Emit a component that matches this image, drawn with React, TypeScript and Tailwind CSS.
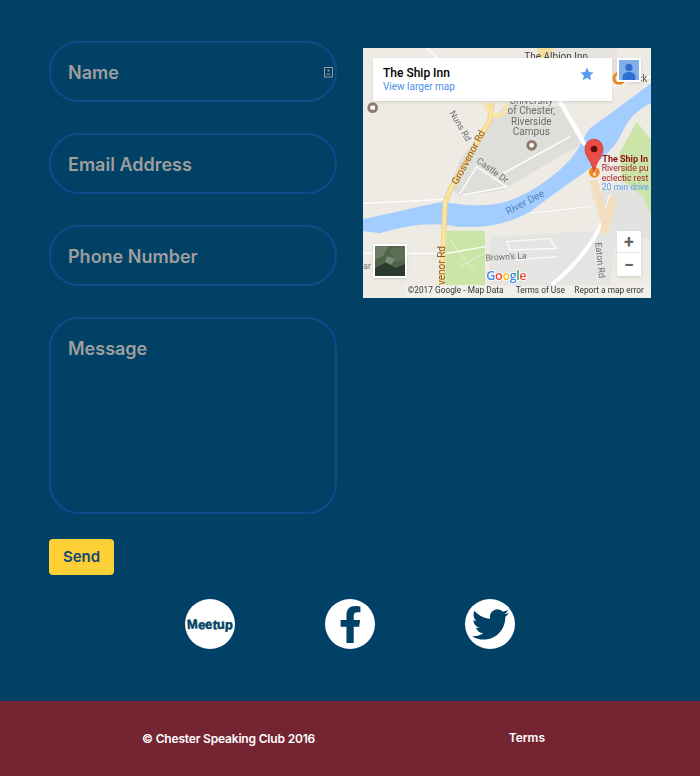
import { FaFacebookF } from 'react-icons/fa'

const fieldClass =
  'block w-full rounded-[30px] border-2 border-[#114a8b] bg-transparent px-[17px] text-[18px] font-semibold text-white placeholder:text-[#9e9e9e] outline-none'

const MapDrawing = () => (
  <svg viewBox="39 24 864 750" className="block h-full w-full blur-[0.4px]" fontFamily="Roboto, sans-serif">
    <rect x="39" y="24" width="864" height="750" fill="#eeebe4" />
    {/* grey built up areas */}
    <path d="M470 190 L640 200 L700 310 L560 390 L460 450 L330 470 L300 440 L330 360 L400 270 Z" fill="#dededa" />
    <path d="M420 590 L800 570 L780 740 L420 740 Z" fill="#e4e4e2" />
    <path d="M560 24 L800 24 L800 100 L620 180 L600 60 Z" fill="#e6e4de" />
    <path d="M720 460 L903 420 L903 600 L790 580 Z" fill="#e2e2e0" />
    {/* parks */}
    <path d="M290 572 L405 572 L405 735 L285 735 Z" fill="#cbe4a8" />
    <path d="M808 340 L860 245 L903 300 L903 530 L880 470 L815 420 Z" fill="#cbe4a8" />
    <path d="M560 24 L610 24 L590 60 L570 60 Z" fill="#f5df9e" />
    {/* river */}
    <path
      d="M39 537 C120 520 200 500 280 485 C330 495 400 500 450 490 C520 475 600 420 650 370 C690 330 700 290 720 265 C770 230 850 170 903 130 L903 190 C860 210 835 235 810 290 C790 330 740 370 700 400 C640 440 590 480 540 515 C470 555 400 565 320 560 C250 545 170 555 90 580 L39 573 Z"
      fill="#a3ccff"
    />
    {/* white roads */}
    <g fill="none" stroke="#fff" strokeLinecap="round">
      <path d="M630 185 L702 310" strokeWidth="13" />
      <path d="M780 470 C770 540 720 640 610 730" strokeWidth="12" />
      <path d="M39 490 L280 478" strokeWidth="4" />
      <path d="M40 640 L290 640 L405 620" strokeWidth="4" />
      <path d="M340 465 L470 440 L380 380 L330 460" strokeWidth="4" />
      <path d="M460 400 L660 290" strokeWidth="4" />
      <path d="M470 605 L600 595 L620 625 L480 630 Z" strokeWidth="4" opacity="0.8" />
      <path d="M500 660 L620 650" strokeWidth="4" opacity="0.8" />
      <path d="M540 520 L720 500" strokeWidth="3" />
      <path d="M300 600 L370 690 M330 680 L400 640" strokeWidth="2" opacity="0.8" />
      <path d="M230 24 L280 70 M700 160 L903 110" strokeWidth="5" />
    </g>
    {/* yellow road */}
    <path d="M275 735 L285 490 L300 450 L420 240 L425 190" fill="none" stroke="#e8cf8e" strokeWidth="16" />
    <path d="M275 735 L285 490 L300 450 L420 240 L425 190" fill="none" stroke="#fbe3a0" strokeWidth="11" />
    <path d="M405 190 C420 240 470 240 470 190" fill="none" stroke="#fbe3a0" strokeWidth="11" />
    <path d="M730 420 L770 570 M790 470 L760 580" stroke="#f3dfbf" strokeWidth="24" fill="none" />
    <g fill="#6d6d6d">
      <text x="523" y="60" fontSize="30" fill="#444">The Albion Inn</text>
      <text x="544" y="192" textAnchor="middle" fontSize="30">University</text>
      <text x="544" y="222" textAnchor="middle" fontSize="30">of Chester,</text>
      <text x="544" y="254" textAnchor="middle" fontSize="30">Riverside</text>
      <text x="544" y="286" textAnchor="middle" fontSize="30">Campus</text>
      <text transform="translate(298 218) rotate(60)" fontSize="27">Nuns Rd</text>
      <text transform="translate(378 366) rotate(36)" fontSize="27">Castle Dr</text>
      <text transform="translate(322 436) rotate(-62)" fontSize="30" fill="#8a5a1c">Grosvenor Rd</text>
      <text transform="translate(286 735) rotate(-90)" fontSize="30" fill="#8a5a1c">venor Rd</text>
      <text transform="translate(474 525) rotate(-28)" fontSize="30" fill="#4a7fc0">River Dee</text>
      <text x="407" y="662" fontSize="26" transform="rotate(-3 407 662)">Brown's La</text>
      <text transform="translate(736 608) rotate(84)" fontSize="27">Eaton Rd</text>
      <text x="40" y="688" fontSize="26">ar</text>
      <text x="757" y="366" fontSize="27" fontWeight="700" fill="#8e0f13">The Ship In</text>
      <text x="755" y="394" fontSize="26" fill="#a3262a">Riverside pu</text>
      <text x="755" y="422" fontSize="26" fill="#a3262a">eclectic rest</text>
      <text x="755" y="450" fontSize="26" fill="#5b9bf0">20 min drive</text>
    </g>
    {/* poi dots */}
    <circle cx="68" cy="203" r="16" fill="#8f7a6e" />
    <rect x="61" y="197" width="14" height="12" fill="#fff" />
    <circle cx="545" cy="316" r="16" fill="#8f7a6e" />
    <circle cx="545" cy="316" r="7" fill="#fff" />
    <circle cx="807" cy="115" r="15" fill="none" stroke="#f08a1d" strokeWidth="9" />
    <text x="832" y="126" fontSize="30" fill="#555">Hick</text>
    <circle cx="733" cy="397" r="16" fill="#f08a1d" />
    <rect x="730" y="387" width="6" height="20" fill="#fff" />
    {/* marker */}
    <path
      d="M732 298 C712 298 705 316 705 328 C705 350 725 362 732 398 C739 362 759 350 759 328 C759 316 752 298 732 298 Z"
      fill="#ea4d45"
      stroke="#c9342e"
      strokeWidth="2"
    />
    <circle cx="732" cy="327" r="10" fill="#5c0f0c" />
    {/* google logo */}
    <text
      x="409"
      y="719"
      fontSize="38"
      fontFamily="'Open Sans', sans-serif"
      fontWeight="600"
      stroke="#fff"
      strokeWidth="5"
      paintOrder="stroke"
      textLength="121"
    >
      <tspan fill="#4285f4">G</tspan>
      <tspan fill="#ea4335">o</tspan>
      <tspan fill="#fbbc05">o</tspan>
      <tspan fill="#4285f4">g</tspan>
      <tspan fill="#34a853">l</tspan>
      <tspan fill="#ea4335">e</tspan>
    </text>
    {/* attribution */}
    <rect x="165" y="736" width="738" height="38" fill="#f3f2ee" opacity="0.75" />
    <g fontSize="25" fill="#333">
      <text x="173" y="758">©2017 Google - Map Data</text>
      <text x="497" y="758">Terms of Use</text>
      <text x="673" y="758">Report a map error</text>
    </g>
  </svg>
)

const MapEmbed = () => (
  <div className="relative h-[250px] w-[288px] overflow-hidden bg-[#eeebe4] font-['Roboto',sans-serif]">
    <MapDrawing />
    {/* place card */}
    <div className="absolute left-[10px] top-[10px] flex h-[43px] w-[239px] items-start justify-between bg-white pl-[10px] pr-[18px] pt-[7px] shadow-sm">
      <div>
        <div className="text-[12px] font-medium leading-[16px] text-black">The Ship Inn</div>
        <div className="text-[10px] leading-[12px] text-[#4d90e8]">View larger map</div>
      </div>
      <svg viewBox="0 0 24 24" className="mt-[2px] h-[14px] w-[14px]" fill="#5b9bf0">
        <path d="M12 1l3.4 7.4 7.9.9-5.9 5.4 1.7 7.9L12 18.6l-7.1 4 1.7-7.9L.7 9.3l7.9-.9z" />
      </svg>
    </div>
    {/* street view */}
    <div className="absolute left-[254px] top-[10px] flex h-[24px] w-[24px] items-end justify-center border-2 border-white bg-[#82aeea] shadow-sm">
      <svg viewBox="0 0 20 20" className="h-[18px] w-[18px]" fill="#2f6fd0">
        <circle cx="10" cy="6" r="4" />
        <path d="M3 20v-4c0-3 3-5 7-5s7 2 7 5v4z" />
      </svg>
    </div>
    {/* zoom control */}
    <div className="absolute left-[254px] top-[183px] flex h-[45px] w-[24px] flex-col items-center bg-white text-[#666] shadow-sm">
      <div className="flex h-[22px] w-full items-center justify-center border-b border-[#e6e6e6]">
        <span className="text-[18px] font-bold leading-none">+</span>
      </div>
      <div className="flex flex-1 items-center justify-center">
        <span className="text-[18px] font-bold leading-none">−</span>
      </div>
    </div>
    {/* satellite thumb */}
    <div className="absolute left-[10px] top-[196px] h-[34px] w-[34px] border-2 border-white shadow-sm">
      <svg viewBox="0 0 30 30" className="block h-full w-full blur-[0.5px]">
        <rect width="30" height="30" fill="#4f6349" />
        <path d="M0 0h14l-6 10L0 14z" fill="#6b7c66" />
        <path d="M14 4l16-4v14l-10 2z" fill="#5b6f55" />
        <path d="M0 22l12-6 8 6 10-4v12H0z" fill="#2c3b30" />
        <path d="M12 10l8 3-4 6-6-3z" fill="#7c8a78" />
      </svg>
    </div>
  </div>
)

const SocialCircle = ({ children }: { children: React.ReactNode }) => (
  <a className="flex h-[50px] w-[50px] items-center justify-center rounded-full bg-white text-[#004165]">
    {children}
  </a>
)

export default function App() {
  return (
    <div className="flex min-h-[776px] w-[700px] flex-col bg-[#004165] font-['Inter',sans-serif]">
      <div className="flex-1 pl-[49px] pt-[41px]">
        <div className="flex items-start gap-[26px]">
          <form className="flex w-[288px] flex-col gap-[31px]">
            <div className="relative">
              <input placeholder="Name" className={`${fieldClass} h-[61px] pt-[2px]`} />
              {/* autofill contact icon */}
              <svg
                viewBox="0 0 10 11"
                className="absolute right-[3px] top-[26px] h-[11px] w-[10px]"
                fill="none"
                stroke="#9a9a9a"
              >
                <rect x="0.5" y="0.5" width="8" height="9.5" />
                <circle cx="4.5" cy="3.6" r="1.1" fill="#9a9a9a" stroke="none" />
                <path d="M2.5 7.2h4" />
              </svg>
            </div>
            <input placeholder="Email Address" className={`${fieldClass} h-[61px] pt-[2px]`} />
            <input placeholder="Phone Number" className={`${fieldClass} h-[61px] pt-[2px]`} />
            <textarea
              placeholder="Message"
              className={`${fieldClass} h-[197px] resize-none pt-[18px] leading-[24px]`}
            />
          </form>
          <div className="mt-[7px]">
            <MapEmbed />
          </div>
        </div>
        <button className="mt-[25px] block h-[36px] w-[65px] rounded-[4px] bg-[#fdd035] text-[15px] font-semibold text-[#12477a]">
          Send
        </button>
        <div className="mt-[24px] flex w-[602px] justify-center gap-[90px]">
          <SocialCircle>
            <svg viewBox="0 0 50 50" className="h-[50px] w-[50px]">
              <text
                x="25"
                y="30"
                textAnchor="middle"
                fontFamily="'Liberation Sans', sans-serif"
                fontWeight="700"
                fontSize="13"
                stroke="#004165"
                strokeWidth="0.5"
                rotate="-4 3 -3 4 -3 3"
                fill="#004165"
              >
                Meetup
              </text>
            </svg>
          </SocialCircle>
          <SocialCircle>
            <FaFacebookF className="h-[37px] w-[37px]" />
          </SocialCircle>
          <SocialCircle>
            <svg viewBox="0 0 24 24" className="h-[37px] w-[37px]" fill="currentColor">
              <path d="M23.953 4.57a10 10 0 01-2.825.775 4.958 4.958 0 002.163-2.723c-.951.555-2.005.959-3.127 1.184a4.92 4.92 0 00-8.384 4.482C7.69 8.095 4.067 6.13 1.64 3.162a4.822 4.822 0 00-.666 2.475c0 1.71.87 3.213 2.188 4.096a4.904 4.904 0 01-2.228-.616v.06a4.923 4.923 0 003.946 4.827 4.996 4.996 0 01-2.212.085 4.936 4.936 0 004.604 3.417 9.867 9.867 0 01-6.102 2.105c-.39 0-.779-.023-1.17-.067a13.995 13.995 0 007.557 2.209c9.053 0 13.998-7.496 13.998-13.985 0-.21 0-.42-.015-.63A9.935 9.935 0 0024 4.59z" />
            </svg>
          </SocialCircle>
        </div>
      </div>
      <footer className="flex h-[75px] items-center bg-[#752532] pl-[142px] pr-[155px] text-[12px] font-semibold text-white">
        <span className="tracking-[-0.18px]">© Chester Speaking Club 2016</span>
        <a className="ml-auto -translate-y-[1px]">Terms</a>
      </footer>
    </div>
  )
}
